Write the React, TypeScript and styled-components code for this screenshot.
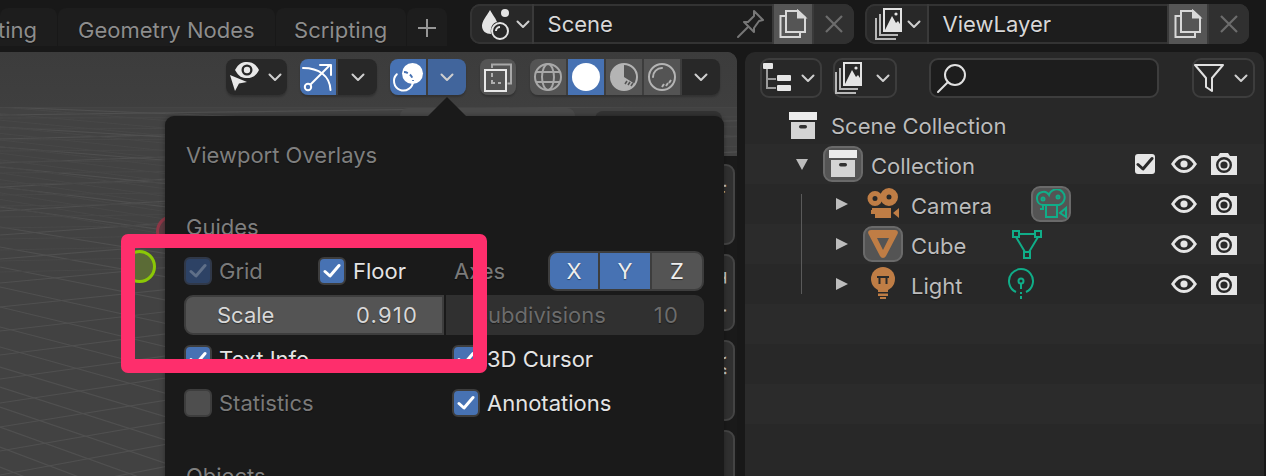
import React from "react";
import styled, { createGlobalStyle } from "styled-components";

const GlobalStyle = createGlobalStyle`
    html, body {
        margin: 0;
        padding: 0;
        background: #181818;
    }
    * {
        box-sizing: border-box;
    }
`;

const BLUE = "#4772b3";
const ORANGE = "#bf7d45";
const GREEN = "#10ad88";

const Page = styled.div`
    width: 1266px;
    height: 476px;
    overflow: hidden;
    background: #181818;
    display: flex;
    flex-direction: column;
    font-family: Inter, "Liberation Sans", sans-serif;
    font-size: 22px;
    color: #d0d0d0;
    text-shadow: 0 1px 1px rgba(0, 0, 0, 0.45);
    position: relative;
`;

/* ---------- top bar ---------- */

const TopBar = styled.div`
    height: 52px;
    flex: none;
    display: flex;
    align-items: flex-start;
`;

const Tabs = styled.div`
    display: flex;
    gap: 1px;
    margin-top: 8px;
    margin-right: 23px;
`;

const Tab = styled.div<{ $width?: number; $center?: boolean }>`
    height: 38px;
    width: ${({ $width }) => ($width ? $width + "px" : "auto")};
    padding: ${({ $center }) => ($center ? "6px 0 0" : "6px 20px 0")};
    background: #1d1d1d;
    border-radius: 8px 8px 0 0;
    color: #8d8d8d;
    display: flex;
    align-items: center;
    justify-content: ${({ $center }) => ($center ? "center" : "flex-end")};
    white-space: nowrap;
    overflow: hidden;
    flex: none;
`;

const AddTab = styled(Tab)`
    width: 40px;
    padding: 2px 0 0;
    justify-content: center;
`;

const IdGroup = styled.div<{ $mr?: number }>`
    width: 384px;
    height: 40px;
    margin-top: 4px;
    margin-right: ${({ $mr }) => $mr ?? 0}px;
    display: flex;
    gap: 2px;
    background: #3a3a3a;
    border-radius: 10px;
    overflow: hidden;
    flex: none;
`;

const IdMenu = styled.div`
    width: 62px;
    padding-left: 8px;
    background: #282828;
    display: flex;
    align-items: center;
    border: 2px solid #333;
    border-right: none;
    border-radius: 10px 0 0 10px;
`;

const IdField = styled.div`
    flex: 1;
    padding: 0 6px 0 14px;
    background: #1d1d1d;
    border: 2px solid #333;
    border-width: 2px 0;
    color: #d8d8d8;
    display: flex;
    align-items: center;
    justify-content: space-between;
`;

const IdAction = styled.div<{ $kind: "copy" | "close" }>`
    width: ${({ $kind }) => ($kind === "copy" ? 38 : 40)}px;
    background: ${({ $kind }) => ($kind === "copy" ? "#555" : "#303030")};
    display: flex;
    align-items: center;
    justify-content: center;
`;

/* ---------- main area ---------- */

const Main = styled.div`
    flex: 1;
    display: flex;
    gap: 8px;
    min-height: 0;
`;

const Viewport = styled.div`
    width: 737px;
    flex: none;
    position: relative;
    border-radius: 0 10px 0 0;
    overflow: hidden;
    background: #424242;
`;

const ViewGrid = styled.svg`
    position: absolute;
    left: 0;
    top: 55px;
`;

const ViewHeader = styled.div`
    height: 55px;
    padding: 7px 17px 0 0;
    background: linear-gradient(#3c3c3c, #3f3f3f);
    display: flex;
    justify-content: flex-end;
    align-items: flex-start;
    position: relative;
`;

const ButtonGroup = styled.div<{ $ml?: number; $joined?: boolean }>`
    display: flex;
    gap: ${({ $joined }) => ($joined ? 0 : 2)}px;
    margin-left: ${({ $ml }) => $ml ?? 0}px;
    border-radius: 8px;
    overflow: hidden;
    box-shadow: 0 2px 2px rgba(0, 0, 0, 0.2);
`;

const ToolButton = styled.div<{ $tone?: "blue" | "deep" | "grey" | "dark"; $width?: number }>`
    width: ${({ $width }) => $width ?? 36}px;
    height: 36px;
    display: flex;
    align-items: center;
    justify-content: center;
    background: ${({ $tone }) =>
        $tone === "blue" ? BLUE : $tone === "deep" ? "#41659c" : $tone === "grey" ? "#545454" : "#282828"};
`;

const BackPanel = styled.div<{ $left: number; $width: number; $top: number; $fill: string }>`
    position: absolute;
    left: ${({ $left }) => $left}px;
    top: ${({ $top }) => $top}px;
    width: ${({ $width }) => $width}px;
    height: 30px;
    background: ${({ $fill }) => $fill};
    border-radius: 8px 8px 0 0;
`;

const GizmoDot = styled.div<{ $left: number; $top: number; $fill: string; $line: string }>`
    position: absolute;
    left: ${({ $left }) => $left}px;
    top: ${({ $top }) => $top}px;
    width: 33px;
    height: 33px;
    border-radius: 50%;
    background: ${({ $fill }) => $fill};
    border: 3px solid ${({ $line }) => $line};
`;

const SideBar = styled.div`
    position: absolute;
    left: 690px;
    top: 104px;
    width: 47px;
    bottom: 0;
    padding-top: 8px;
    background: #1a1a1a;
    display: flex;
    flex-direction: column;
    gap: 9px;
`;

const SideTab = styled.div<{ $height: number }>`
    width: 45px;
    height: ${({ $height }) => $height}px;
    background: #303030;
    border: 2px solid #444;
    border-radius: 0 9px 9px 0;
    display: flex;
    align-items: center;
    justify-content: center;
    padding-left: 10px;
    writing-mode: vertical-rl;
    font-size: 21px;
    color: #ccc;
    flex: none;
`;

/* ---------- popover ---------- */

const Popover = styled.div`
    position: absolute;
    left: 165px;
    top: 64px;
    width: 559px;
    height: 420px;
    padding: 19px 20px 0 19px;
    background: #1a1a1a;
    border-radius: 9px 9px 0 0;
    box-shadow: 0 0 5px rgba(0, 0, 0, 0.35);
`;

const PopoverArrow = styled.div`
    position: absolute;
    left: 263px;
    top: -19px;
    width: 38px;
    height: 19px;
    background: #1a1a1a;
    clip-path: polygon(50% 0, 100% 100%, 0 100%);
`;

const Heading = styled.div<{ $mt?: number }>`
    height: 40px;
    margin-top: ${({ $mt }) => $mt ?? 0}px;
    padding-left: 2px;
    display: flex;
    align-items: center;
    color: #7f7f7f;
`;

const OptionRow = styled.div<{ $mt: number }>`
    height: 40px;
    margin-top: ${({ $mt }) => $mt}px;
    display: grid;
    grid-template-columns: 260px 258px;
    column-gap: 2px;
    align-items: center;
`;

const OptionCell = styled.div<{ $pl?: number }>`
    display: flex;
    align-items: center;
    height: 100%;
    padding-left: ${({ $pl }) => $pl ?? 0}px;
`;

const CheckItem = styled.div<{ $width?: number }>`
    display: flex;
    align-items: center;
    gap: 7px;
    width: ${({ $width }) => ($width ? $width + "px" : "auto")};
    flex: none;
`;

const CheckBox = styled.div<{ $state: "on" | "dim" | "off" }>`
    width: 28px;
    height: 28px;
    border-radius: 6px;
    border: 2px solid ${({ $state }) => ($state === "dim" ? "#303848" : "#3d3d3d")};
    background: ${({ $state }) => ($state === "on" ? BLUE : $state === "dim" ? "#2d4265" : "#4e4e4e")};
    display: flex;
    align-items: center;
    justify-content: center;
`;

const OptionLabel = styled.span<{ $dim?: boolean }>`
    color: ${({ $dim }) => ($dim ? "#7a7a7a" : "#e4e4e4")};
`;

const AxesLabel = styled.span`
    color: #7a7a7a;
    margin-left: 8px;
    width: 94px;
`;

const AxisGroup = styled.div`
    width: 156px;
    height: 40px;
    padding: 2px;
    display: grid;
    grid-template-columns: 48px 50px 50px;
    gap: 2px;
    background: #3d3d3d;
    border-radius: 9px;
`;

const AxisButton = styled.div<{ $on?: boolean; $pos: "start" | "mid" | "end" }>`
    display: flex;
    align-items: center;
    justify-content: center;
    color: #eee;
    background: ${({ $on }) => ($on ? BLUE : "#545454")};
    border-radius: ${({ $pos }) => ($pos === "start" ? "7px 0 0 7px" : $pos === "end" ? "0 7px 7px 0" : "0")};
`;

const NumberField = styled.div<{ $side: "left" | "right" }>`
    height: 40px;
    padding: ${({ $side }) => ($side === "left" ? "0 24px 0 31px" : "0 23px 0 26px")};
    display: flex;
    align-items: center;
    justify-content: space-between;
    background: ${({ $side }) => ($side === "left" ? "#545454" : "#303030")};
    border: 2px solid ${({ $side }) => ($side === "left" ? "#3d3d3d" : "#303030")};
    border-radius: ${({ $side }) => ($side === "left" ? "9px 0 0 9px" : "0 9px 9px 0")};
    color: ${({ $side }) => ($side === "left" ? "#d8d8d8" : "#6c6c6c")};
`;

const NumberValue = styled.span`
    letter-spacing: 1.2px;
`;

/* ---------- pink annotation ---------- */

const Highlight = styled.div`
    position: absolute;
    left: 121px;
    top: 234px;
    width: 366px;
    height: 139px;
    border: 14px solid #fe2e6c;
    border-radius: 7px;
`;

/* ---------- outliner ---------- */

const Outliner = styled.div`
    width: 519px;
    flex: none;
    background: #282828;
    border-radius: 10px 10px 0 0;
    overflow: hidden;
    position: relative;
`;

const OutlinerHeader = styled.div`
    height: 55px;
    padding: 6px 9px 0 15px;
    display: flex;
    align-items: flex-start;
`;

const HeaderDrop = styled.div<{ $width: number; $ml?: number }>`
    width: ${({ $width }) => $width}px;
    height: 40px;
    margin-left: ${({ $ml }) => $ml ?? 0}px;
    padding-right: 5px;
    border: 2px solid #3d3d3d;
    border-radius: 9px;
    display: flex;
    align-items: center;
    justify-content: space-between;
    flex: none;
`;

const SearchBox = styled(HeaderDrop)`
    background: #1d1d1d;
    padding: 0 0 0 5px;
    justify-content: flex-start;
`;

const TreeRow = styled.div<{ $stripe?: boolean; $indent: number; $height?: number }>`
    height: ${({ $height }) => $height ?? 40}px;
    padding-left: ${({ $indent }) => $indent}px;
    padding-right: 27px;
    background: ${({ $stripe }) => ($stripe ? "#2b2b2b" : "#282828")};
    display: flex;
    align-items: center;
`;

const Disclosure = styled.div<{ $open?: boolean }>`
    width: 12px;
    height: 12px;
    margin-right: 15px;
    background: #bdbdbd;
    clip-path: ${({ $open }) =>
        $open ? "polygon(0 8%, 100% 8%, 50% 100%)" : "polygon(0 0, 100% 50%, 0 100%)"};
    flex: none;
`;

const IconSlot = styled.div<{ $active?: boolean }>`
    width: 40px;
    height: 36px;
    margin-right: 8px;
    display: flex;
    align-items: center;
    justify-content: center;
    flex: none;
    border-radius: 9px;
    background: ${({ $active }) => ($active ? "#545454" : "transparent")};
    border: 2px solid ${({ $active }) => ($active ? "#6a6a6a" : "transparent")};
`;

const DataSlot = styled(IconSlot)<{ $ml: number }>`
    margin-left: ${({ $ml }) => $ml}px;
    margin-right: 0;
`;

const TreeLabel = styled.span<{ $flush?: boolean }>`
    color: #bcbcbc;
    white-space: nowrap;
    padding-top: ${({ $flush }) => ($flush ? 0 : 4)}px;
`;

const RowControls = styled.div`
    margin-left: auto;
    display: flex;
    align-items: center;
    gap: 14px;
`;

const ExcludeBox = styled.div`
    width: 20px;
    height: 20px;
    margin-right: 2px;
    background: #e6e6e6;
    border-radius: 3px;
    display: flex;
    align-items: center;
    justify-content: center;
`;

const TreeLine = styled.div`
    position: absolute;
    left: 56px;
    top: 142px;
    width: 1px;
    height: 100px;
    background: #5a5a5a;
`;

/* ---------- drawings ---------- */

const Chevron = ({ color = "#cfcfcf" }: { color?: string }) => (
    <svg width="14" height="9" viewBox="0 0 14 9">
        <path d="M1.5 1.5 L7 7 L12.5 1.5" fill="none" stroke={color} strokeWidth="2" strokeLinecap="round" strokeLinejoin="round" />
    </svg>
);

const EyeSelectIcon = () => (
    <svg width="36" height="36" viewBox="0 0 36 36">
        <path fillRule="evenodd" fill="#e8e8e8" d="M9 11 C13 4 16 3 21 3 C26 3 30 5 33 11 C30 17 26 19 21 19 C16 19 13 18 9 11 Z M21 5.5 A5.5 5.5 0 1 0 21 16.5 A5.5 5.5 0 1 0 21 5.5 Z" />
        <circle cx="21" cy="11" r="3.2" fill="#e8e8e8" />
        <path d="M4 16 L21 23 L13 24.5 L9 32 Z" fill="#e8e8e8" />
    </svg>
);

const GizmoIcon = () => (
    <svg width="36" height="36" viewBox="0 0 36 36" fill="none" stroke="#fff" strokeWidth="2" strokeLinecap="round" strokeLinejoin="round">
        <circle cx="8" cy="28" r="3.2" />
        <path d="M10.5 25.5 L30 6" />
        <path d="M20 6 H31 V16" />
        <path d="M3 9 C19 9 30 17 30.5 31" />
    </svg>
);

const OverlayIcon = () => (
    <svg width="36" height="36" viewBox="0 0 36 36" fill="none">
        <path d="M6.8 15.3 A9.5 9.5 0 1 0 23 22" stroke="#fff" strokeWidth="2" strokeLinecap="round" />
        <circle cx="22.5" cy="14.5" r="10.5" fill="#fff" />
        <path d="M14 13 A9.5 9.5 0 0 1 23 22" stroke={BLUE} strokeWidth="2" strokeDasharray="4 2.5" />
    </svg>
);

const XRayIcon = () => (
    <svg width="36" height="36" viewBox="0 0 36 36" fill="none" strokeWidth="2">
        <path d="M12 9 V5.5 H31 V24.5 H27.5" stroke="#a8a8a8" />
        <rect x="5" y="11" width="21" height="21" stroke="#e8e8e8" />
        <path d="M12 14 V18 M12 21 V24 H15 M18 24 H21" stroke="#b0b0b0" />
    </svg>
);

const WireIcon = () => (
    <svg width="36" height="36" viewBox="0 0 36 36" fill="none" stroke="#a8a8a8" strokeWidth="2">
        <circle cx="18" cy="18" r="13" />
        <ellipse cx="18" cy="18" rx="6" ry="13" />
        <path d="M6 13 H30 M6 23 H30" />
    </svg>
);

const SolidIcon = () => (
    <svg width="36" height="36" viewBox="0 0 36 36">
        <circle cx="18" cy="18" r="14" fill="#fff" />
    </svg>
);

const MaterialIcon = () => (
    <svg width="36" height="36" viewBox="0 0 36 36">
        <circle cx="18" cy="18" r="13" fill="none" stroke="#b4b4b4" strokeWidth="2" />
        <path d="M18 5 A13 13 0 0 0 5 18 C8 24 14 26 18 18 Z M5 18 A13 13 0 0 0 18 31 A13 13 0 0 0 29 25 L18 18 Z" fill="#b4b4b4" />
        <path d="M22 26 L24 23 M25 27 L27 24 M19 25 L21 22" stroke="#545454" strokeWidth="1.6" />
    </svg>
);

const RenderIcon = () => (
    <svg width="36" height="36" viewBox="0 0 36 36" fill="none" stroke="#b4b4b4">
        <circle cx="18" cy="18" r="13" strokeWidth="2" />
        <path d="M9 18 A9 9 0 0 1 18 9" strokeWidth="2" strokeLinecap="round" />
        <path d="M18 28 L20 25 M22 27 L24 24 M25 24 L27 21" strokeWidth="2" />
    </svg>
);

const SceneIcon = () => (
    <svg width="36" height="36" viewBox="0 0 36 36">
        <path d="M10 4 C6 11 2 15 2 20 C2 25 6 28 11 28 C10 22 12 17 17 16 C15 11 12 8 10 4 Z" fill="#e4e4e4" />
        <circle cx="25" cy="7" r="4" fill="#e4e4e4" />
        <circle cx="20" cy="25" r="8" fill="none" stroke="#e4e4e4" strokeWidth="2" />
        <path d="M16 25 A4 4 0 0 1 20 21" fill="none" stroke="#e4e4e4" strokeWidth="2" />
    </svg>
);

const PinIcon = () => (
    <svg width="30" height="30" viewBox="0 0 30 30" fill="none" stroke="#777" strokeWidth="2" strokeLinejoin="round" strokeLinecap="round">
        <path d="M18 2 L27 11 L23 12 L18 19 L18 23 L8 13 L12 13 L18 7 Z" />
        <path d="M12 18 L2 28" />
    </svg>
);

const CopyIcon = () => (
    <svg width="30" height="30" viewBox="0 0 30 30" fill="none" stroke="#d8d8d8" strokeWidth="2">
        <path d="M8 7 H2.5 V28 H22 V23" />
        <path d="M8 23 V2 H20 L27 8.5 V23 Z" />
        <path d="M20 2 L27 8.5 H20 Z" fill="#d8d8d8" />
    </svg>
);

const CloseIcon = () => (
    <svg width="20" height="20" viewBox="0 0 20 20" stroke="#6c6c6c" strokeWidth="2.2">
        <path d="M2 2 L18 18 M18 2 L2 18" />
    </svg>
);

const LayerIcon = () => (
    <svg width="32" height="32" viewBox="0 0 32 32">
        <path d="M9 1 H26 V23 H9 Z" fill="none" stroke="#e4e4e4" strokeWidth="2" />
        <path d="M10 22 L17 8 L21 15 L23 13 L25 16 V22 Z" fill="#e4e4e4" />
        <circle cx="21" cy="6" r="1.6" fill="#e4e4e4" />
        <path d="M5 6 V27 H23 M1 10 V31 H21" fill="none" stroke="#b8b8b8" strokeWidth="2" />
    </svg>
);

const TreeIcon = () => (
    <svg width="32" height="32" viewBox="0 0 32 32">
        <rect x="1" y="1" width="10" height="6" rx="1" fill="#e6e6e6" />
        <path d="M5 7 V26 H14 M5 17 H14" fill="none" stroke="#9a9a9a" strokeWidth="2" />
        <rect x="15" y="13" width="14" height="6" rx="1" fill="#e6e6e6" />
        <rect x="15" y="23" width="14" height="6" rx="1" fill="#e6e6e6" />
    </svg>
);

const SearchIcon = () => (
    <svg width="32" height="32" viewBox="0 0 32 32" fill="none" stroke="#e0e0e0" strokeWidth="2">
        <circle cx="19" cy="13" r="10" />
        <path d="M12 20 L2 30" strokeLinecap="round" />
    </svg>
);

const FilterIcon = () => (
    <svg width="30" height="30" viewBox="0 0 30 30" fill="none" stroke="#e0e0e0" strokeWidth="2" strokeLinejoin="round">
        <path d="M1 2 H29 L18 15 V28 L12 24 V15 Z" />
    </svg>
);

const CollectionIcon = () => (
    <svg width="28" height="28" viewBox="0 0 28 28">
        <rect x="0" y="0" width="28" height="8" fill="#ececec" />
        <path d="M2 10 H26 V27 H2 Z" fill="#d4d4d4" />
        <rect x="10" y="13" width="8" height="3.5" rx="1.7" fill="#333" />
    </svg>
);

const CameraObjectIcon = () => (
    <svg width="32" height="32" viewBox="0 0 32 32">
        <path fillRule="evenodd" fill={ORANGE} d="M8 3 A7.5 7.5 0 1 0 8 18 A7.5 7.5 0 1 0 8 3 Z M8 8 A2.5 2.5 0 1 1 8 13 A2.5 2.5 0 1 1 8 8 Z" />
        <path fillRule="evenodd" fill={ORANGE} d="M22 0 A9 9 0 1 0 22 18 A9 9 0 1 0 22 0 Z M22 6.5 A2.5 2.5 0 1 1 22 11.5 A2.5 2.5 0 1 1 22 6.5 Z" />
        <path d="M5 20 H24 V30 H8 V26 H4 V22 H5 Z" fill={ORANGE} />
        <path d="M32 20 V30 L26 25 Z" fill={ORANGE} />
    </svg>
);

const MeshObjectIcon = () => (
    <svg width="30" height="28" viewBox="0 0 30 28">
        <path fillRule="evenodd" fill={ORANGE} d="M3 0 H27 C29.5 0 30.5 2 29.5 4 L18 26 C16.5 28.6 13.5 28.6 12 26 L0.5 4 C-0.5 2 0.5 0 3 0 Z M9 8 L15 20 L21 8 Z" />
    </svg>
);

const LightObjectIcon = () => (
    <svg width="28" height="34" viewBox="0 0 28 34">
        <circle cx="14" cy="12" r="12" fill={ORANGE} />
        <path d="M9 21 H19 V25 H9 Z M9 26.5 H19 V29 H9 Z M11 30 H17 V32 H11 Z" fill={ORANGE} />
        <path d="M8 10 H20 M10.5 10 V17 M17.5 10 V17" fill="none" stroke="#2a2a2a" strokeWidth="2" />
    </svg>
);

const CameraDataIcon = () => (
    <svg width="32" height="30" viewBox="0 0 32 30" fill="none" stroke={GREEN} strokeWidth="2">
        <path d="M14 6 A6.5 6.5 0 0 0 2 10 A6.5 6.5 0 0 0 8 16 H24 A8 8 0 1 0 14 6 Z" />
        <circle cx="8" cy="10" r="1.5" />
        <circle cx="23" cy="8" r="1.5" />
        <path d="M8 16 V20 H5 M11 16 V28 H22 V16" />
        <path d="M31 19 V28 L25 24 Z" />
    </svg>
);

const MeshDataIcon = () => (
    <svg width="30" height="30" viewBox="0 0 30 30" fill="none" stroke={GREEN} strokeWidth="2">
        <rect x="1" y="2" width="6" height="6" />
        <rect x="23" y="2" width="6" height="6" />
        <rect x="12" y="23" width="6" height="6" />
        <path d="M7 5 H23 M4 8 L13 23 M26 8 L17 23" />
    </svg>
);

const LightDataIcon = () => (
    <svg width="28" height="32" viewBox="0 0 28 32" fill="none" stroke={GREEN} strokeWidth="2">
        <path d="M9 24 A12 12 0 1 1 19 24" />
        <circle cx="14" cy="13" r="2.5" />
        <path d="M14 16 V21 M14 24 V26 M14 28 V31" />
    </svg>
);

const EyeIcon = () => (
    <svg width="26" height="18" viewBox="0 0 26 18">
        <path fillRule="evenodd" fill="#e6e6e6" d="M0 9 C4 3 8 0 13 0 C18 0 22 3 26 9 C22 15 18 18 13 18 C8 18 4 15 0 9 Z M13 3 C9 3 6 5 3.5 9 C6 13 9 15 13 15 C17 15 20 13 22.5 9 C20 5 17 3 13 3 Z" />
        <circle cx="13" cy="9" r="3.6" fill="#e6e6e6" />
    </svg>
);

const RenderCameraIcon = () => (
    <svg width="26" height="22" viewBox="0 0 26 22">
        <path fillRule="evenodd" fill="#e6e6e6" d="M0 3 H7 L9 0 H17 L19 3 H26 V22 H0 Z M13 4 A8 8 0 1 0 13 20 A8 8 0 1 0 13 4 Z" />
        <circle cx="13" cy="12" r="4.6" fill="none" stroke="#e6e6e6" strokeWidth="2" />
    </svg>
);

const CheckMark = ({ color = "#fff" }: { color?: string }) => (
    <svg width="18" height="16" viewBox="0 0 18 16">
        <path d="M2 8.5 L7 13 L16 2.5" fill="none" stroke={color} strokeWidth="3" strokeLinejoin="round" strokeLinecap="round" />
    </svg>
);

// ground grid of the 3D view: two families of lines running to a vanishing point
function FloorGrid() {
    const w = 737;
    const h = 370;
    const lines: React.ReactNode[] = [];
    const family = (vx: number, vy: number, step: number, key: string) => {
        for (let y = -40; y < 1400; y += step) {
            const slope = (y - vy) / (0 - vx);
            lines.push(<line key={key + y} x1={0} y1={y} x2={w} y2={y + slope * w} />);
        }
    };
    family(-1000, -40, 20, "a");
    family(2100, -20, 24, "b");
    // fainter far lines near the horizon
    const far: React.ReactNode[] = [];
    for (let y = 0; y < 170; y += 11) {
        far.push(<line key={"f" + y} x1={0} y1={y} x2={w} y2={y - y * 0.1} />);
        far.push(<line key={"g" + y} x1={0} y1={y * 0.6} x2={w} y2={y * 0.6 + 60 + y * 0.4} />);
    }
    return (
        <ViewGrid width={w} height={h} viewBox={`0 0 ${w} ${h}`} stroke="#505050" strokeWidth="1.2">
            {lines}
            <g stroke="#484848" strokeWidth="1">
                {far}
            </g>
        </ViewGrid>
    );
}

const Check = ({ label, state = "on", dim, width }: { label: string; state?: "on" | "dim" | "off"; dim?: boolean; width?: number }) => (
    <CheckItem $width={width}>
        <CheckBox $state={state}>
            {state !== "off" && <CheckMark color={state === "dim" ? "#5f6f88" : "#fff"} />}
        </CheckBox>
        <OptionLabel $dim={dim}>{label}</OptionLabel>
    </CheckItem>
);

const Controls = ({ exclude }: { exclude?: boolean }) => (
    <RowControls>
        {exclude && (
            <ExcludeBox>
                <CheckMark color="#2a2a2a" />
            </ExcludeBox>
        )}
        <EyeIcon />
        <RenderCameraIcon />
    </RowControls>
);

export default function App() {
    return (
        <Page>
            <GlobalStyle />
            <TopBar>
                <Tabs>
                    <Tab $width={57}>Compositing</Tab>
                    <Tab>Geometry Nodes</Tab>
                    <Tab $width={130} $center>Scripting</Tab>
                    <AddTab>
                        <svg width="20" height="20" viewBox="0 0 20 20" stroke="#969696" strokeWidth="2">
                            <path d="M10 1 V19 M1 10 H19" />
                        </svg>
                    </AddTab>
                </Tabs>
                <IdGroup $mr={11}>
                    <IdMenu>
                        <SceneIcon />
                        <Chevron />
                    </IdMenu>
                    <IdField>
                        Scene
                        <PinIcon />
                    </IdField>
                    <IdAction $kind="copy">
                        <CopyIcon />
                    </IdAction>
                    <IdAction $kind="close">
                        <CloseIcon />
                    </IdAction>
                </IdGroup>
                <IdGroup>
                    <IdMenu>
                        <LayerIcon />
                        <Chevron />
                    </IdMenu>
                    <IdField>ViewLayer</IdField>
                    <IdAction $kind="copy">
                        <CopyIcon />
                    </IdAction>
                    <IdAction $kind="close">
                        <CloseIcon />
                    </IdAction>
                </IdGroup>
            </TopBar>
            <Main>
                <Viewport>
                    <FloorGrid />
                    <GizmoDot $left={156} $top={163} $fill="#5a3a40" $line="#8f3646" />
                    <GizmoDot $left={123} $top={198} $fill="#5b6b36" $line="#8bc806" />
                    <BackPanel $left={400} $width={175} $top={56} $fill="#4a4a4a" />
                    <BackPanel $left={595} $width={127} $top={59} $fill="#333" />
                    <ViewHeader>
                        <ButtonGroup $joined>
                            <ToolButton>
                                <EyeSelectIcon />
                            </ToolButton>
                            <ToolButton $width={25}>
                                <Chevron />
                            </ToolButton>
                        </ButtonGroup>
                        <ButtonGroup $ml={13}>
                            <ToolButton $tone="blue">
                                <GizmoIcon />
                            </ToolButton>
                            <ToolButton $width={39}>
                                <Chevron />
                            </ToolButton>
                        </ButtonGroup>
                        <ButtonGroup $ml={13}>
                            <ToolButton $tone="blue">
                                <OverlayIcon />
                            </ToolButton>
                            <ToolButton $tone="deep" $width={38}>
                                <Chevron />
                            </ToolButton>
                        </ButtonGroup>
                        <ButtonGroup $ml={14}>
                            <ToolButton $tone="grey">
                                <XRayIcon />
                            </ToolButton>
                        </ButtonGroup>
                        <ButtonGroup $ml={14}>
                            <ToolButton $tone="grey">
                                <WireIcon />
                            </ToolButton>
                            <ToolButton $tone="blue">
                                <SolidIcon />
                            </ToolButton>
                            <ToolButton $tone="grey">
                                <MaterialIcon />
                            </ToolButton>
                            <ToolButton $tone="grey">
                                <RenderIcon />
                            </ToolButton>
                            <ToolButton $width={38}>
                                <Chevron />
                            </ToolButton>
                        </ButtonGroup>
                    </ViewHeader>
                    <SideBar>
                        <SideTab $height={81}>Item</SideTab>
                        <SideTab $height={77}>Tool</SideTab>
                        <SideTab $height={81}>View</SideTab>
                        <SideTab $height={81} />
                    </SideBar>
                    <Popover>
                        <PopoverArrow />
                        <Heading>Viewport Overlays</Heading>
                        <Heading $mt={32}>Guides</Heading>
                        <OptionRow $mt={4}>
                            <OptionCell>
                                <Check label="Grid" state="dim" dim width={134} />
                                <Check label="Floor" />
                            </OptionCell>
                            <OptionCell>
                                <AxesLabel>Axes</AxesLabel>
                                <AxisGroup>
                                    <AxisButton $on $pos="start">X</AxisButton>
                                    <AxisButton $on $pos="mid">Y</AxisButton>
                                    <AxisButton $pos="end">Z</AxisButton>
                                </AxisGroup>
                            </OptionCell>
                        </OptionRow>
                        <OptionRow $mt={4}>
                            <NumberField $side="left">
                                <span>Scale</span>
                                <NumberValue>0.910</NumberValue>
                            </NumberField>
                            <NumberField $side="right">
                                <span>Subdivisions</span>
                                <NumberValue>10</NumberValue>
                            </NumberField>
                        </OptionRow>
                        <OptionRow $mt={4}>
                            <OptionCell>
                                <Check label="Text Info" />
                            </OptionCell>
                            <OptionCell $pl={6}>
                                <Check label="3D Cursor" />
                            </OptionCell>
                        </OptionRow>
                        <OptionRow $mt={4}>
                            <OptionCell>
                                <Check label="Statistics" state="off" dim />
                            </OptionCell>
                            <OptionCell $pl={6}>
                                <Check label="Annotations" />
                            </OptionCell>
                        </OptionRow>
                        <Heading $mt={33}>Objects</Heading>
                    </Popover>
                </Viewport>
                <Outliner>
                    <OutlinerHeader>
                        <HeaderDrop $width={62}>
                            <TreeIcon />
                            <Chevron />
                        </HeaderDrop>
                        <HeaderDrop $width={64} $ml={11}>
                            <LayerIcon />
                            <Chevron />
                        </HeaderDrop>
                        <SearchBox $width={230} $ml={32}>
                            <SearchIcon />
                        </SearchBox>
                        <HeaderDrop $width={63} $ml={33}>
                            <FilterIcon />
                            <Chevron />
                        </HeaderDrop>
                    </OutlinerHeader>
                    <TreeRow $indent={38} $height={37}>
                        <IconSlot>
                            <CollectionIcon />
                        </IconSlot>
                        <TreeLabel $flush>Scene Collection</TreeLabel>
                    </TreeRow>
                    <TreeRow $indent={51} $stripe>
                        <Disclosure $open />
                        <IconSlot $active>
                            <CollectionIcon />
                        </IconSlot>
                        <TreeLabel>Collection</TreeLabel>
                        <Controls exclude />
                    </TreeRow>
                    <TreeRow $indent={91}>
                        <Disclosure />
                        <IconSlot>
                            <CameraObjectIcon />
                        </IconSlot>
                        <TreeLabel>Camera</TreeLabel>
                        <DataSlot $active $ml={39}>
                            <CameraDataIcon />
                        </DataSlot>
                        <Controls />
                    </TreeRow>
                    <TreeRow $indent={91} $stripe>
                        <Disclosure />
                        <IconSlot $active>
                            <MeshObjectIcon />
                        </IconSlot>
                        <TreeLabel>Cube</TreeLabel>
                        <DataSlot $ml={41}>
                            <MeshDataIcon />
                        </DataSlot>
                        <Controls />
                    </TreeRow>
                    <TreeRow $indent={91}>
                        <Disclosure />
                        <IconSlot>
                            <LightObjectIcon />
                        </IconSlot>
                        <TreeLabel>Light</TreeLabel>
                        <DataSlot $ml={39}>
                            <LightDataIcon />
                        </DataSlot>
                        <Controls />
                    </TreeRow>
                    <TreeRow $indent={0} $stripe />
                    <TreeRow $indent={0} />
                    <TreeRow $indent={0} $stripe />
                    <TreeRow $indent={0} />
                    <TreeLine />
                </Outliner>
            </Main>
            <Highlight />
        </Page>
    );
}
